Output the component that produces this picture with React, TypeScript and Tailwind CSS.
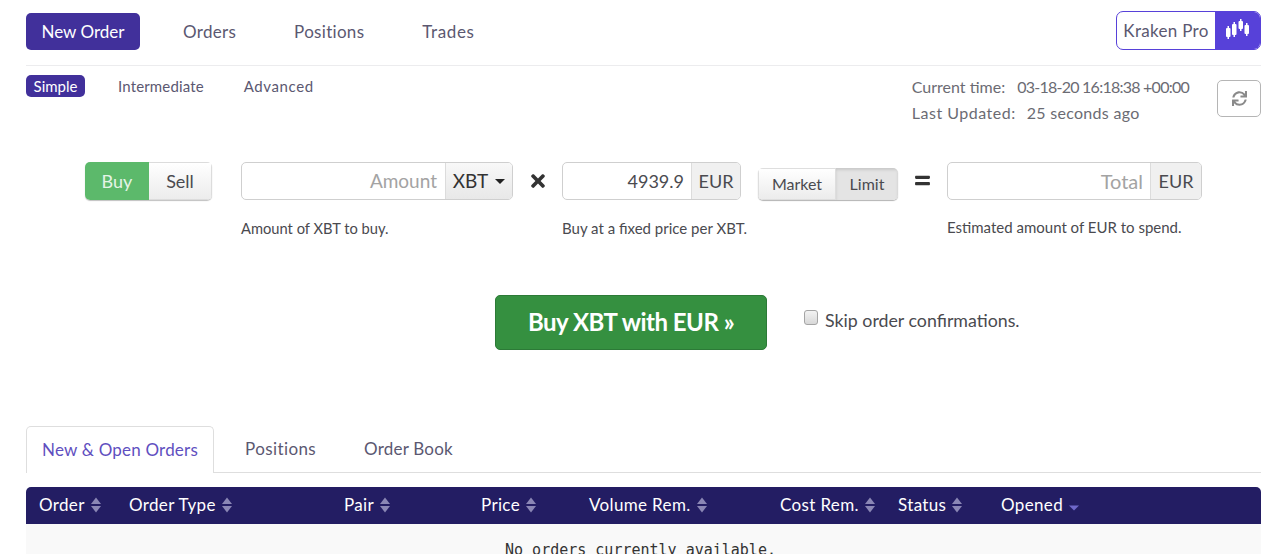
import { FaEquals, FaSync, FaTimes } from 'react-icons/fa';

const columns = [
  { label: 'Order', width: 'w-[90px]' },
  { label: 'Order Type', width: 'w-[215px]' },
  { label: 'Pair', width: 'w-[137px]' },
  { label: 'Price', width: 'w-[108px]' },
  { label: 'Volume Rem.', width: 'w-[191px]' },
  { label: 'Cost Rem.', width: 'w-[118px]' },
  { label: 'Status', width: 'w-[103px]' },
  { label: 'Opened', width: 'w-[180px]', active: true },
];

function SortIcon({ active }: { active?: boolean }) {
  if (active) {
    return (
      <svg width="10" height="14" viewBox="0 0 10 14" className="ml-[6px] mt-[4px]">
        <path d="M0 5.5h10L5 10.5z" fill="#6f68c9" />
      </svg>
    );
  }
  return (
    <svg width="10" height="16" viewBox="0 0 10 16" className="ml-[6px]">
      <path d="M5 0.5L10 7H0z" fill="#8b87b5" />
      <path d="M0 9h10l-5 6.5z" fill="#8b87b5" />
    </svg>
  );
}

function CandleIcon() {
  return (
    <svg width="24" height="20" viewBox="0 0 24 20" fill="#fff" className="-mt-[4px]">
      <rect x="0" y="9" width="4.5" height="9" rx="1" />
      <rect x="1.5" y="7" width="1.5" height="13" />
      <rect x="6" y="5" width="4.5" height="11" rx="1" />
      <rect x="7.5" y="3" width="1.5" height="15" />
      <rect x="12.5" y="2" width="4.5" height="8" rx="1" />
      <rect x="14" y="0" width="1.5" height="12" />
      <rect x="18.5" y="6" width="4.5" height="9" rx="1" />
      <rect x="20" y="4" width="1.5" height="13" />
    </svg>
  );
}

export default function App() {
  return (
    <div className="h-[554px] overflow-hidden bg-white pl-[26px] pr-[22px] font-['Lato',sans-serif] text-[#5b5871]">
      {/* Top nav */}
      <div className="flex h-[66px] items-start justify-between border-b border-[#ececee] pt-[13px]">
        <div className="flex items-center text-[17px] tracking-[0.3px]">
          <div className="flex h-[37px] w-[114px] items-center justify-center rounded-[5px] bg-[#41309b] tracking-normal text-white">New Order</div>
          <span className="ml-[43px]">Orders</span>
          <span className="ml-[58px]">Positions</span>
          <span className="ml-[58px] tracking-[0.6px]">Trades</span>
        </div>
        <div className="-mt-[2px] flex h-[39px] w-[145px] overflow-hidden rounded-[7px] border border-[#5741d9]">
          <span className="flex flex-1 items-center justify-center text-[17px] tracking-[0.3px]">Kraken Pro</span>
          <span className="flex w-[45px] items-center justify-center bg-[#5741d9]">
            <CandleIcon />
          </span>
        </div>
      </div>

      {/* Mode + time */}
      <div className="flex h-[96px] items-start justify-between">
        <div className="mt-[9px] flex items-center text-[15px]">
          <span className="flex h-[22px] w-[59px] items-center justify-center rounded-[5px] bg-[#41309b] text-white">Simple</span>
          <span className="ml-[33px] tracking-[0.15px]">Intermediate</span>
          <span className="ml-[40px] tracking-[0.6px]">Advanced</span>
        </div>
        <div className="flex items-start">
          <div className="mt-[8px] text-[16px] leading-[26px] text-[#6b6b73]">
            <div>
              Current time:<span className="ml-[12px] tracking-[-0.75px]">03-18-20 16:18:38 +00:00</span>
            </div>
            <div>
              <span className="tracking-[0.5px]">Last Updated:</span>
              <span className="ml-[11px] tracking-[0.3px]">25 seconds ago</span>
            </div>
          </div>
          <div className="ml-[28px] mt-[14px] flex h-[37px] w-[44px] items-center justify-center rounded-[5px] border border-[#b5b5b5] text-[#8a8a8a]">
            <FaSync size={15} />
          </div>
        </div>
      </div>

      {/* Order form */}
      <div className="ml-[59px] flex items-start text-[#4a4a4f]">
        <div className="flex h-[38px] w-[127px] overflow-hidden rounded-[5px] text-[18px] shadow-[0_1px_1px_rgba(0,0,0,0.25)]">
          <span className="flex w-[64px] items-center justify-center bg-[#5cb96b] text-[#e4f4e6]">Buy</span>
          <span className="flex flex-1 items-center justify-center border border-l-0 border-[#dcdcdc] bg-gradient-to-b from-white to-[#ececec]">Sell</span>
        </div>

        <div className="ml-[29px] w-[272px]">
          <div className="flex h-[38px] overflow-hidden rounded-[5px] border border-[#cfcfcf] text-[19px]">
            <span className="flex flex-1 items-center justify-end pr-[8px] text-[#a3a3a3]">Amount</span>
            <span className="flex w-[67px] items-center justify-center gap-[7px] border-l border-[#dcdcdc] bg-gradient-to-b from-[#f8f8f8] to-[#e8e8e8] text-[#333]">
              XBT
              <span className="mt-[1px] h-0 w-0 border-x-[5px] border-t-[5px] border-x-transparent border-t-[#222]" />
            </span>
          </div>
          <p className="mt-[20px] whitespace-nowrap text-[14.7px] leading-[17px]">Amount of XBT to buy.</p>
        </div>

        <div className="flex h-[38px] w-[49px] items-center justify-center text-[#333]">
          <FaTimes size={20} />
        </div>

        <div className="w-[179px]">
          <div className="flex h-[38px] overflow-hidden rounded-[5px] border border-[#cfcfcf] text-[18px]">
            <span className="flex flex-1 items-center justify-end pr-[7px] text-[#4a4a4f]">4939.9</span>
            <span className="flex w-[49px] items-center justify-center border-l border-[#dcdcdc] bg-[#f0f0f0]">EUR</span>
          </div>
          <p className="mt-[20px] whitespace-nowrap text-[15px] leading-[17px]">Buy at a fixed price per XBT.</p>
        </div>

        <div className="ml-[17px] mt-[6px] flex h-[32px] w-[140px] overflow-hidden rounded-[5px] text-[16px] shadow-[0_1px_1px_rgba(0,0,0,0.3)]">
          <span className="flex w-[78px] items-center justify-center border border-[#dedede] bg-gradient-to-b from-white to-[#ececec]">Market</span>
          <span className="flex flex-1 items-center justify-center bg-[#e4e4e4] shadow-[inset_0_2px_3px_rgba(0,0,0,0.12)]">Limit</span>
        </div>

        <div className="flex h-[36px] w-[49px] items-center justify-center text-[#333]">
          <FaEquals size={17} />
        </div>

        <div className="w-[255px]">
          <div className="flex h-[38px] overflow-hidden rounded-[5px] border border-[#cfcfcf] text-[18px]">
            <span className="flex flex-1 items-center justify-end pr-[7px] text-[20px] text-[#a3a3a3]">Total</span>
            <span className="flex w-[51px] items-center justify-center border-l border-[#dcdcdc] bg-[#f0f0f0]">EUR</span>
          </div>
          <p className="mt-[19px] whitespace-nowrap text-[15px] leading-[17px]">Estimated amount of EUR to spend.</p>
        </div>
      </div>

      {/* Submit */}
      <div className="ml-[469px] mt-[58px] flex items-start">
        <div className="flex h-[55px] w-[272px] items-center justify-center rounded-[5px] border border-[#2c7a37] bg-[#359040] pb-[2px] text-[24px] font-bold tracking-[-0.5px] text-white">
          Buy XBT with EUR »
        </div>
        <div className="ml-[37px] mt-[15px] flex items-start text-[#4a4a4f]">
          <span className="h-[15px] w-[14px] rounded-[3px] border border-[#a5a5a5] bg-gradient-to-b from-[#f3f3f3] to-[#d8d8d8]" />
          <span className="ml-[7px] text-[17.8px] leading-[20px]">Skip order confirmations.</span>
        </div>
      </div>

      {/* Tabs */}
      <div className="mt-[76px] flex h-[47px] items-stretch border-b border-[#dedede] text-[17px] tracking-[0.2px]">
        <div className="-mb-px flex w-[188px] items-center justify-center rounded-t-[5px] border border-b-0 border-[#dedede] bg-white text-[#5f4fc0]">New &amp; Open Orders</div>
        <span className="ml-[31px] flex items-center tracking-[0.4px]">Positions</span>
        <span className="ml-[48px] flex items-center">Order Book</span>
      </div>

      {/* Orders table */}
      <div className="mt-[14px] flex h-[37px] items-center rounded-t-[5px] bg-[#231d63] pb-[1px] text-[17px] tracking-[0.35px] text-white">
        {columns.map(col => (
          <div key={col.label} className={`flex items-center pl-[13px] ${col.width}`}>
            {col.label}
            <SortIcon active={col.active} />
          </div>
        ))}
      </div>
      <div className="h-[60px] bg-[#f9f9f9] pr-[6px] pt-[15px] text-center font-['DejaVu_Sans_Mono',monospace] text-[15px] text-[#333]">
        No orders currently available.
      </div>
    </div>
  );
}
